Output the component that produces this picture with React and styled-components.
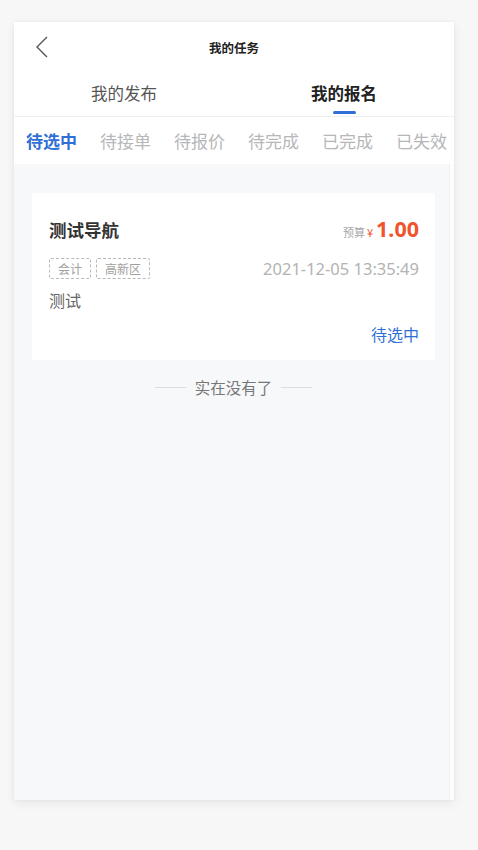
import React, { useState } from 'react';
import styled, { createGlobalStyle } from 'styled-components';

const GlobalStyle = createGlobalStyle`
  html, body {
    margin: 0;
    padding: 0;
    background: #f7f7f7;
    font-family: "Noto Sans CJK SC", "Noto Sans", sans-serif;
  }
`;

const Page = styled.div`
  width: 478px;
  height: 850px;
  padding: 22px 0 0 14px;
  box-sizing: border-box;
`;

const Phone = styled.div`
  width: 440px;
  height: 778px;
  display: flex;
  flex-direction: column;
  background: #fff;
  box-shadow: 0 3px 10px rgba(0, 0, 0, 0.07), 0 0 2px rgba(0, 0, 0, 0.06);
  overflow: hidden;
`;

const NavBar = styled.div`
  height: 50px;
  display: grid;
  grid-template-columns: 1fr auto 1fr;
  align-items: center;
`;

const BackButton = styled.div`
  padding-left: 22px;
  display: flex;
  align-items: center;
  height: 22px;
`;

const NavTitle = styled.div`
  font-size: 12.5px;
  font-weight: 700;
  color: #222;
`;

const TopTabs = styled.div`
  height: 44px;
  display: flex;
  border-bottom: 1px solid #eeeff1;
`;

const TopTab = styled.div`
  flex: 1;
  position: relative;
  display: flex;
  justify-content: center;
  align-items: center;
  padding-bottom: 2px;
  font-size: 16.5px;
  font-weight: ${({ active }) => (active ? 700 : 400)};
  color: ${({ active }) => (active ? '#222' : '#555')};

  &::after {
    content: '';
    display: ${({ active }) => (active ? 'block' : 'none')};
    position: absolute;
    bottom: 2px;
    left: 50%;
    width: 23px;
    height: 3px;
    margin-left: -11px;
    border-radius: 2px;
    background: #2f6fd6;
  }
`;

const StatusClip = styled.div`
  margin-right: 5px;
  overflow: hidden;
`;

const StatusBar = styled.div`
  height: 47px;
  display: flex;
  align-items: center;
  gap: 23px;
  padding-left: 12px;
  white-space: nowrap;
`;

const StatusTab = styled.div`
  flex-shrink: 0;
  font-size: 17px;
  font-weight: ${({ active }) => (active ? 700 : 400)};
  color: ${({ active }) => (active ? '#2f6fd6' : '#b6b7b9')};
`;

const Body = styled.div`
  flex: 1;
  display: flex;
  min-height: 0;
`;

const Content = styled.div`
  flex: 1;
  background: #f7f8fa;
  padding: 29px 14px 0 18px;
`;

const ScrollTrack = styled.div`
  width: 4px;
  background: #fdfdfd;
  border-left: 1px solid #f0f0f2;
`;

const Card = styled.div`
  background: #fff;
  padding: 20px 16px 15px 17px;
`;

const Row = styled.div`
  display: flex;
  justify-content: space-between;
  align-items: center;
  height: ${({ h }) => h || 22}px;
  margin-top: ${({ mt }) => mt || 0}px;
`;

const CardTitle = styled.div`
  font-size: 17.5px;
  font-weight: 700;
  color: #333;
`;

const Price = styled.div`
  display: flex;
  align-items: baseline;
  color: #f0532d;
`;

const PriceLabel = styled.span`
  font-size: 11px;
  color: #a8a8a8;
  margin-right: 2px;
`;

const Yen = styled.span`
  font-size: 11px;
  margin-right: 3px;
`;

const Amount = styled.span`
  font-family: "Noto Sans", sans-serif;
  font-size: 21.5px;
  font-weight: 700;
  line-height: 1;
`;

const Tags = styled.div`
  display: flex;
  gap: 5px;
`;

const Tag = styled.span`
  height: 19px;
  line-height: 19px;
  padding: 0 8px;
  font-size: 12px;
  color: #a0a0a0;
  border: 1px dashed #b9b9b9;
  border-radius: 2px;
`;

const DateText = styled.div`
  font-family: "Noto Sans", sans-serif;
  font-size: 16.5px;
  color: #b3b3b3;
`;

const Desc = styled.div`
  font-size: 16px;
  color: #666;
`;

const CardStatus = styled.div`
  margin-left: auto;
  font-size: 16px;
  color: #2f6fd6;
`;

const EndNote = styled.div`
  margin-top: 16px;
  height: 22px;
  display: flex;
  justify-content: center;
  align-items: center;
  gap: 9px;
  font-size: 15.5px;
  color: #777;

  &::before,
  &::after {
    content: '';
    width: 31px;
    height: 1px;
    background: #dedede;
  }
`;

const statuses = ['待选中', '待接单', '待报价', '待完成', '已完成', '已失效'];

export default function App() {
  const [tab, setTab] = useState(1);
  const [status, setStatus] = useState(0);

  return (
    <>
      <GlobalStyle />
      <Page>
        <Phone>
          <NavBar>
            <BackButton>
              <svg width="12" height="22" viewBox="0 0 12 22">
                <polyline points="11,1 1,11 11,21" fill="none" stroke="#555" strokeWidth="1.4" />
              </svg>
            </BackButton>
            <NavTitle>我的任务</NavTitle>
            <div />
          </NavBar>
          <TopTabs>
            {['我的发布', '我的报名'].map((t, i) => (
              <TopTab key={t} active={tab === i} onClick={() => setTab(i)}>{t}</TopTab>
            ))}
          </TopTabs>
          <StatusClip>
            <StatusBar>
              {statuses.map((s, i) => (
                <StatusTab key={s} active={status === i} onClick={() => setStatus(i)}>{s}</StatusTab>
              ))}
            </StatusBar>
          </StatusClip>
          <Body>
            <Content>
              <Card>
                <Row h={32}>
                  <CardTitle>测试导航</CardTitle>
                  <Price>
                    <PriceLabel>预算</PriceLabel>
                    <Yen>¥</Yen>
                    <Amount>1.00</Amount>
                  </Price>
                </Row>
                <Row mt={12}>
                  <Tags>
                    <Tag>会计</Tag>
                    <Tag>高新区</Tag>
                  </Tags>
                  <DateText>2021-12-05 13:35:49</DateText>
                </Row>
                <Row mt={10}>
                  <Desc>测试</Desc>
                </Row>
                <Row mt={12}>
                  <CardStatus>待选中</CardStatus>
                </Row>
              </Card>
              <EndNote>实在没有了</EndNote>
            </Content>
            <ScrollTrack />
          </Body>
        </Phone>
      </Page>
    </>
  );
}
